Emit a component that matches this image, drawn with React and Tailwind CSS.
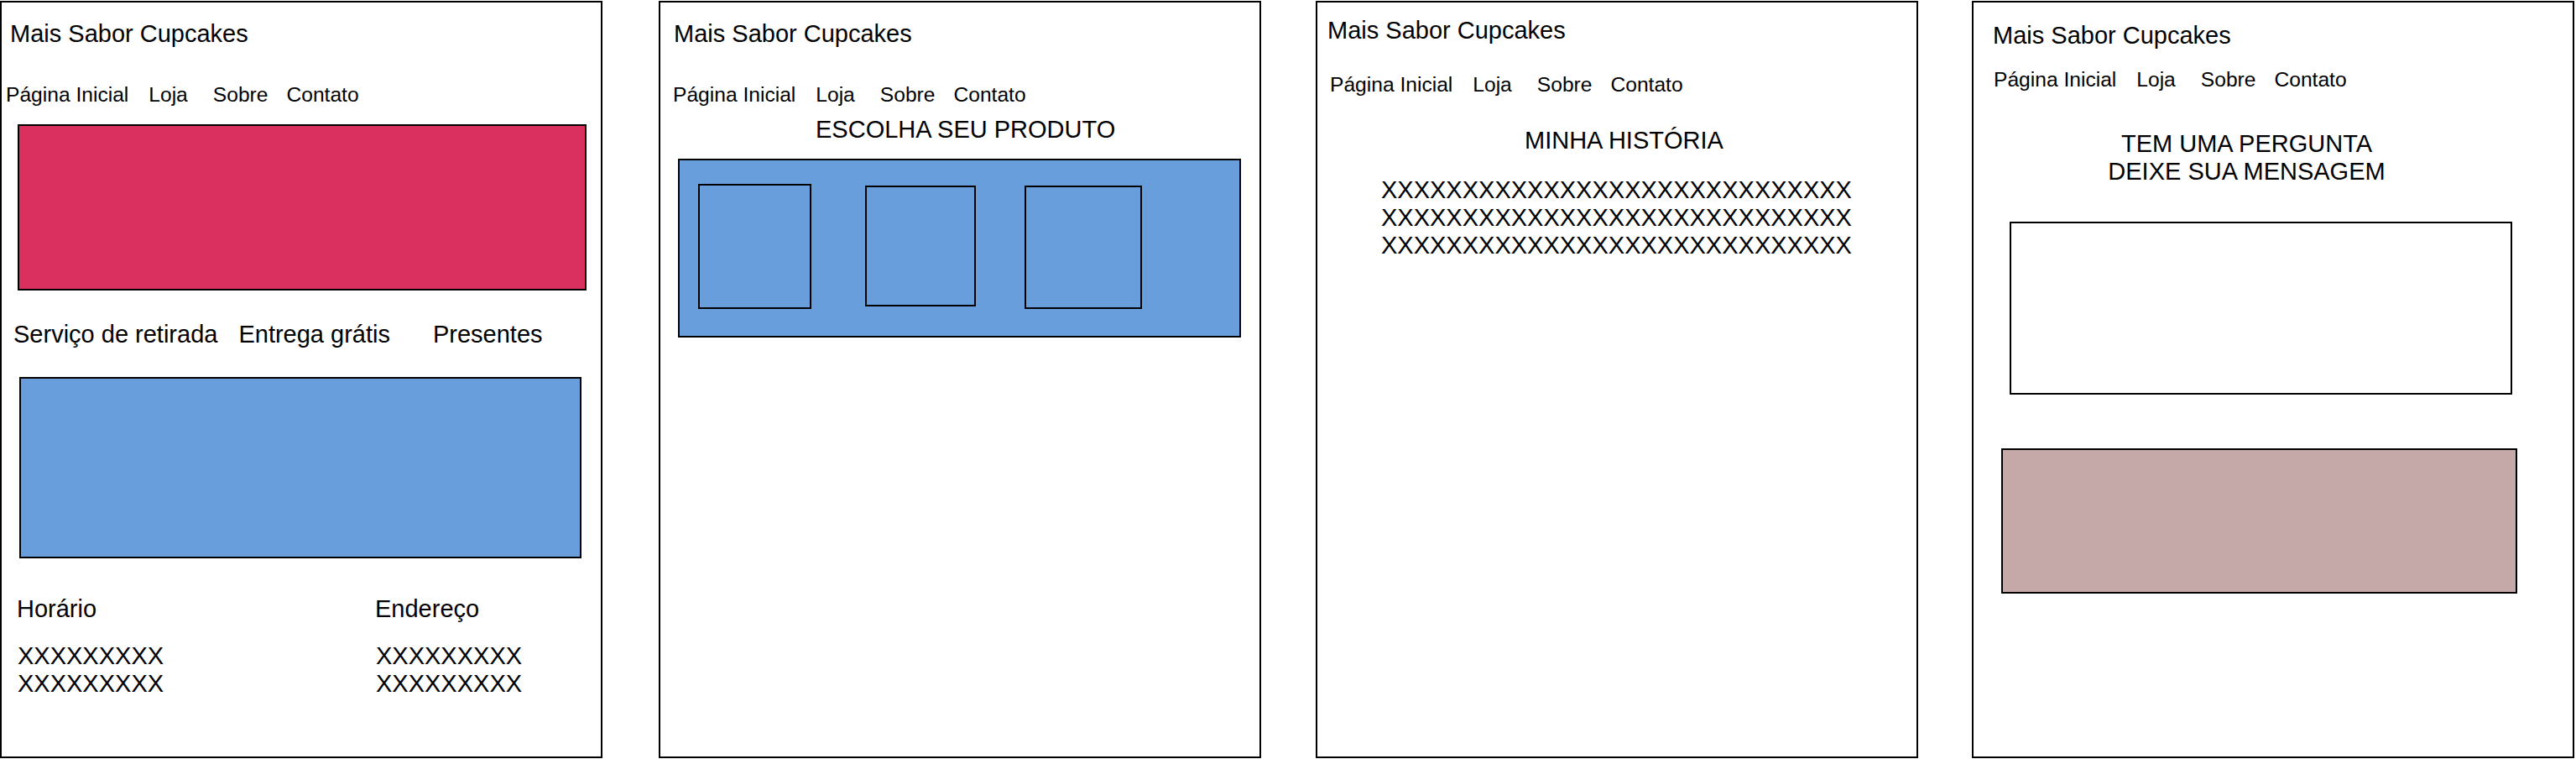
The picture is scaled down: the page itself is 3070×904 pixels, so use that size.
import React from "react";

// Menu repeated at the top of every wireframe page
const Nav = ({ className }) => (
  <div className={`flex text-[24.6px] leading-none whitespace-nowrap ${className}`}>
    <span>Página Inicial</span>
    <span className="ml-[24px]">Loja</span>
    <span className="ml-[30px]">Sobre</span>
    <span className="ml-[22px]">Contato</span>
  </div>
);

const Title = ({ className }) => (
  <div className={`text-[29px] leading-none whitespace-nowrap ${className}`}>
    Mais Sabor Cupcakes
  </div>
);

const Panel = ({ className = "", children }) => (
  <div className={`w-[718px] h-[902px] shrink-0 border-2 border-black bg-white flex flex-col ${className}`}>
    {children}
  </div>
);

const X9 = "XXXXXXXXX";
const X29 = "XXXXXXXXXXXXXXXXXXXXXXXXXXXXX";

const HomePage = () => (
  <Panel className="w-[717px]">
    <Title className="mt-[23px] ml-[10px]" />
    <Nav className="mt-[46px] ml-[5px]" />
    <div className="mt-[22px] ml-[19px] w-[678px] h-[198px] border-2 border-black bg-[#d9305f]" />
    <div className="mt-[38px] ml-[14px] flex text-[29px] leading-none whitespace-nowrap">
      <span>Serviço de retirada</span>
      <span className="ml-[25px]">Entrega grátis</span>
      <span className="ml-[51px]">Presentes</span>
    </div>
    <div className="mt-[36px] ml-[21px] w-[670px] h-[216px] border-2 border-black bg-[#689edc]" />
    <div className="mt-[46px] ml-[18px] flex text-[29px]">
      <div className="w-[427px]">
        <div className="leading-none">Horário</div>
        <div className="mt-[25px] leading-[33px] ml-[1px]">
          <div>{X9}</div>
          <div>{X9}</div>
        </div>
      </div>
      <div>
        <div className="leading-none">Endereço</div>
        <div className="mt-[25px] leading-[33px] ml-[1px]">
          <div>{X9}</div>
          <div>{X9}</div>
        </div>
      </div>
    </div>
  </Panel>
);

const ShopPage = () => (
  <Panel className="ml-[67px]">
    <Title className="mt-[23px] ml-[16px]" />
    <Nav className="mt-[46px] ml-[15px]" />
    <div className="mt-[14px] ml-[185px] text-[29px] leading-none whitespace-nowrap">
      ESCOLHA SEU PRODUTO
    </div>
    <div className="mt-[20px] ml-[21px] w-[671px] h-[213px] border-2 border-black bg-[#689edc] flex items-start">
      <div className="mt-[28px] ml-[22px] w-[135px] h-[149px] border-2 border-black" />
      <div className="mt-[30px] ml-[64px] w-[132px] h-[144px] border-2 border-black" />
      <div className="mt-[30px] ml-[58px] w-[140px] h-[147px] border-2 border-black" />
    </div>
  </Panel>
);

const AboutPage = () => (
  <Panel className="ml-[65px]">
    <Title className="mt-[19px] ml-[12px]" />
    <Nav className="mt-[38px] ml-[15px]" />
    <div className="mt-[39px] ml-[247px] text-[29px] leading-none whitespace-nowrap">
      MINHA HISTÓRIA
    </div>
    <div className="mt-[28px] ml-[76px] text-[29px] leading-[33px] whitespace-nowrap">
      <div>{X29}</div>
      <div>{X29}</div>
      <div>{X29}</div>
    </div>
  </Panel>
);

const ContactPage = () => (
  <Panel className="ml-[64px]">
    <Title className="mt-[25px] ml-[23px]" />
    <Nav className="mt-[26px] ml-[24px]" />
    <div className="mt-[47px] w-[651px] text-center text-[29px] leading-[33px] whitespace-nowrap">
      <div>TEM UMA PERGUNTA</div>
      <div>DEIXE SUA MENSAGEM</div>
    </div>
    <div className="mt-[43px] ml-[43px] w-[599px] h-[206px] border-2 border-black bg-white" />
    <div className="mt-[64px] ml-[33px] w-[615px] h-[173px] border-2 border-black bg-[#c5a8a8]" />
  </Panel>
);

const App = () => {
  return (
    <div className="w-[3070px] h-[904px] bg-white pt-px flex text-black font-['Liberation_Sans',Arial,sans-serif]">
      <HomePage />
      <ShopPage />
      <AboutPage />
      <ContactPage />
    </div>
  );
};

export default App;
